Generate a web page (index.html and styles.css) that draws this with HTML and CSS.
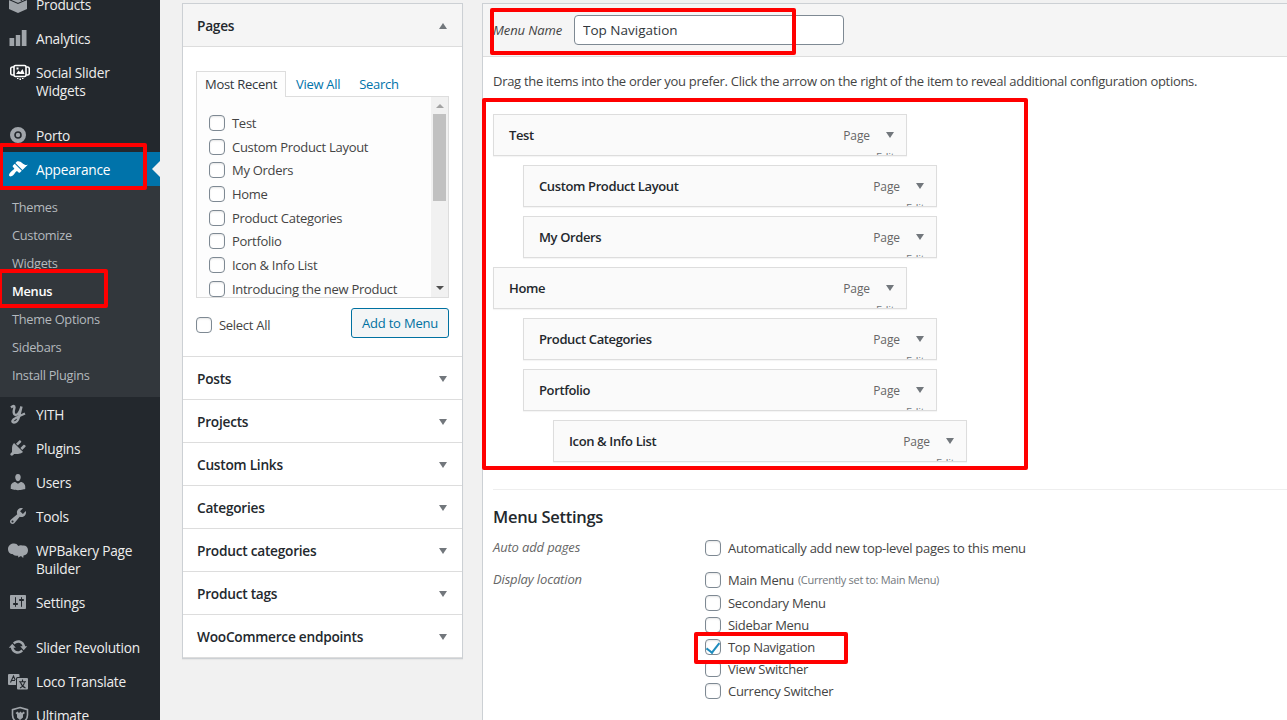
FILE: index.html
```html
<!DOCTYPE html>
<html lang="en">
<head>
  <meta charset="UTF-8">
  <meta name="viewport" content="width=device-width, initial-scale=1.0">
  <title>Menus</title>
  <link rel="stylesheet" href="styles.css">
</head>
<body>
  <div class="wrap">
    <ul class="sidebar">
      <li class="item">
        <svg class="icon" viewBox="0 0 20 20"><path d="M1 4l9-4 9 4v11l-9 4-9-4z"/><path class="cut" d="M1 5.500l9 4 9-4M6 2l8 4.500"/></svg>
        <span>Products</span>
      </li>
      <li class="item">
        <svg class="icon" viewBox="0 0 20 20"><path d="M18.500 18V2h-5v16h5zm-6 0V7h-5v11h5zm-6 0v-8h-5v8h5z"/><path class="cut" d="M7 2v16M13 2v16"/></svg>
        <span>Analytics</span>
      </li>
      <li class="item">
        <svg class="icon social" viewBox="0 0 20 20"><path class="line" d="M5.500 3.500h9a1.500 1.500 0 0 1 1.500 1.500v8a1.500 1.500 0 0 1-1.500 1.500h-9a1.500 1.500 0 0 1-1.500-1.500v-8a1.500 1.500 0 0 1 1.500-1.500zM4 5H2.300Q.7 5 .7 7v4q0 2 1.600 2H4M16 5h1.700q1.600 0 1.600 2v4q0 2-1.600 2H16"/><path d="M6 12l2.500-3.500 1.700 1.800L12.500 7l2 5zM6.500 5.500h2v2h-2zM7 16h1.500v1H7zM9.500 16.500H11v1.500H9.500zM12 16h1.500v1H12z"/></svg>
        <span>Social Slider Widgets</span>
      </li>
      <li class="item gap">
        <svg class="icon" viewBox="0 0 20 20"><circle class="ring" cx="10" cy="10" r="5.900"/><circle cx="10" cy="10" r="2.200"/></svg>
        <span>Porto</span>
      </li>
      <li class="item current">
        <svg class="icon" viewBox="0 0 20 20"><path d="M14.480 11.060L7.410 3.990l1.500-1.500c.5-.56 2.300-.47 3.510.32 1.210.8 1.430 1.280 2.910 2.100 1.180.64 2.450 1.260 4.450.85zm-.71.71L6.700 4.700 4.930 6.470c-.39.39-.39 1.020 0 1.410l1.060 1.060c.39.39.39 1.030 0 1.420-.6.6-1.430 1.110-2.210 1.690-.35.26-.7.53-1.010.84C1.430 14.230.4 16.080 1.400 17.070c.99 1 2.840-.03 4.180-1.360.31-.31.58-.66.85-1.020.57-.78 1.080-1.610 1.690-2.210.39-.39 1.020-.39 1.410 0l1.060 1.060c.39.39 1.020.39 1.410 0z"/></svg>
        <span>Appearance</span>
      </li>
      <li>
        <ul class="submenu">
          <li>Themes</li>
          <li>Customize</li>
          <li>Widgets</li>
          <li class="active">Menus</li>
          <li>Theme Options</li>
          <li>Sidebars</li>
          <li>Install Plugins</li>
        </ul>
      </li>
      <li class="item">
        <svg class="icon" viewBox="0 0 20 20"><path class="line yith" d="M3 3.500Q6.500.5 6.500 3.500 4.500 10.500 7.500 11 11 11 13.500 2.500L11 13Q9.500 18.500 6 18.500 3 18 5.500 15.500 8 13.500 17 9.500"/></svg>
        <span>YITH</span>
      </li>
      <li class="item">
        <svg class="icon" viewBox="0 0 20 20"><path d="M13.110 4.360L9.870 7.600 8 5.730l3.240-3.240c.35-.34 1.050-.2 1.560.32.52.51.66 1.210.31 1.550zm-8 1.770l.91-1.120 9.010 9.010-1.190.84c-.71.71-2.630 1.160-3.820 1.160H6.140L4.900 17.260c-.59.59-1.540.59-2.120 0-.59-.58-.59-1.530 0-2.120l1.240-1.240v-3.880c0-1.130.4-3.190 1.090-3.890zm7.260 3.970l3.240-3.240c.34-.35 1.040-.21 1.550.31.52.51.66 1.210.31 1.550l-3.240 3.250z"/></svg>
        <span>Plugins</span>
      </li>
      <li class="item">
        <svg class="icon" viewBox="0 0 20 20"><path d="M10 9.250c-2.270 0-2.730-3.440-2.730-3.440C7 4.020 7.820 2 9.970 2c2.160 0 2.980 2.020 2.710 3.810 0 0-.41 3.440-2.680 3.440zm0 2.570L12.720 10c2.390 0 4.520 2.330 4.520 4.530v2.490s-3.650 1.130-7.240 1.130c-3.650 0-7.240-1.130-7.240-1.130v-2.490c0-2.250 1.940-4.480 4.470-4.480z"/></svg>
        <span>Users</span>
      </li>
      <li class="item">
        <svg class="icon" viewBox="0 0 20 20"><path d="M16.680 9.770c-1.340 1.340-3.300 1.670-4.950.99l-5.410 6.520c-.99.99-2.590.99-3.580 0s-.99-2.590 0-3.570l6.520-5.420c-.68-1.650-.35-3.610.99-4.950 1.280-1.280 3.120-1.620 4.720-1.060l-2.890 2.890 2.820 2.820 2.860-2.870c.53 1.580.18 3.390-1.080 4.650zM3.810 16.210c.4.39 1.040.39 1.430 0 .4-.4.4-1.040 0-1.430-.39-.4-1.030-.4-1.430 0-.39.39-.39 1.030 0 1.430z"/></svg>
        <span>Tools</span>
      </li>
      <li class="item">
        <svg class="icon" viewBox="0 0 20 20"><path d="M6 3.500c2 0 3.300.8 4.300 2.500 1.200-.7 2.500-.8 3.700-.4C17.500 4.800 20 7 20 10c0 3.500-2 5-4.500 5.500l-.3 2.500-2.200-2-3 1.500.3-1.700C7.500 15.800 5.500 15.300 4.500 14 2 14 0 12 0 9c0-3.500 3-5.500 6-5.500z"/></svg>
        <span>WPBakery Page Builder</span>
      </li>
      <li class="item">
        <svg class="icon" viewBox="0 0 20 20"><path d="M18 16V4c0-.55-.45-1-1-1H3c-.55 0-1 .45-1 1v12c0 .55.45 1 1 1h14c.55 0 1-.45 1-1zM8 11h1c.55 0 1 .45 1 1s-.45 1-1 1H8v1.500c0 .28-.22.5-.5.5s-.5-.22-.5-.5V13H6c-.55 0-1-.45-1-1s.45-1 1-1h1V5.500c0-.28.22-.5.5-.5s.5.22.5.5V11zm5-2h-1c-.55 0-1-.45-1-1s.45-1 1-1h1V5.500c0-.28.22-.5.5-.5s.5.22.5.5V7h1c.55 0 1 .45 1 1s-.45 1-1 1h-1v5.500c0 .28-.22.5-.5.5s-.5-.22-.5-.5V9z"/></svg>
        <span>Settings</span>
      </li>
      <li class="item gap">
        <svg class="icon" viewBox="0 0 20 20"><path d="M10.200 3.280c3.530 0 6.430 2.610 6.920 6h2.080l-3.500 4-3.500-4h2.320c-.45-1.970-2.210-3.450-4.320-3.450-1.450 0-2.730.71-3.540 1.780L4.950 5.660C6.230 4.200 8.110 3.280 10.200 3.280zm-.4 13.440c-3.520 0-6.430-2.610-6.920-6H.8l3.500-4c1.170 1.330 2.330 2.670 3.500 4H5.480c.45 1.970 2.210 3.450 4.320 3.450 1.450 0 2.730-.71 3.540-1.780l1.710 1.950c-1.280 1.460-3.150 2.380-5.250 2.380z"/></svg>
        <span>Slider Revolution</span>
      </li>
      <li class="item">
        <svg class="icon" viewBox="0 0 20 20"><path d="M1 3h9.500q1 0 1 1v2H9.500Q8 6 8 7.500V14H1q-1 0-1-1V4q0-1 1-1zM10 7h9q1 0 1 1v9.500q0 1-1 1h-9q-1 0-1-1V8q0-1 1-1z"/><path class="cut" d="M2.500 11.500L5.500 5l1.700 4M3.500 9.500H7M14.500 8.500v2M11 10.800h7M12 17q4-2 4.500-6M17.500 17q-4-2-5-6"/></svg>
        <span>Loco Translate</span>
      </li>
      <li class="item">
        <svg class="icon shield" viewBox="0 0 20 20"><path class="line" d="M10 2.500l7.500 2.200V10q0 5.500-7.500 9-7.500-3.500-7.500-9V4.700z"/><path d="M5.500 8l2-1.500L9 8l1.500-1.500L12 8l1.500-1.500L15 8l-2 1.500v3L10 15l-3-2.500v-3z"/></svg>
        <span>Ultimate</span>
      </li>
    </ul>

    <div class="main">
      <div class="accordion">
        <div class="acc-title open">Pages</div>
        <div class="acc-body">
          <div class="tabs">
            <span class="tab on">Most Recent</span>
            <span class="tab">View All</span>
            <span class="tab">Search</span>
          </div>
          <div class="tab-panel">
            <div class="pages">
              <label><input type="checkbox"><span>Test</span></label>
              <label><input type="checkbox"><span>Custom Product Layout</span></label>
              <label><input type="checkbox"><span>My Orders</span></label>
              <label><input type="checkbox"><span>Home</span></label>
              <label><input type="checkbox"><span>Product Categories</span></label>
              <label><input type="checkbox"><span>Portfolio</span></label>
              <label><input type="checkbox"><span>Icon &amp; Info List</span></label>
              <label><input type="checkbox"><span>Introducing the new Product</span></label>
            </div>
            <div class="scroll">
              <i class="up"></i>
              <div class="thumb"></div>
              <i class="down"></i>
            </div>
          </div>
          <div class="actions">
            <label><input type="checkbox"><span>Select All</span></label>
            <button class="add">Add to Menu</button>
          </div>
        </div>
        <div class="acc-title">Posts</div>
        <div class="acc-title">Projects</div>
        <div class="acc-title">Custom Links</div>
        <div class="acc-title">Categories</div>
        <div class="acc-title">Product categories</div>
        <div class="acc-title">Product tags</div>
        <div class="acc-title">WooCommerce endpoints</div>
      </div>

      <div class="edit">
        <div class="edit-head">
          <label class="name-label" for="name">Menu Name</label>
          <input class="name-input" id="name" type="text" value="Top Navigation">
        </div>
        <div class="edit-body">
          <p class="drag">Drag the items into the order you prefer. Click the arrow on the right of the item to reveal additional configuration options.</p>
          <ul class="menu">
            <li><b>Test</b><span class="type">Page</span><span class="arrow"><em>Edit</em></span></li>
            <li class="depth1"><b>Custom Product Layout</b><span class="type">Page</span><span class="arrow"><em>Edit</em></span></li>
            <li class="depth1"><b>My Orders</b><span class="type">Page</span><span class="arrow"><em>Edit</em></span></li>
            <li><b>Home</b><span class="type">Page</span><span class="arrow"><em>Edit</em></span></li>
            <li class="depth1"><b>Product Categories</b><span class="type">Page</span><span class="arrow"><em>Edit</em></span></li>
            <li class="depth1"><b>Portfolio</b><span class="type">Page</span><span class="arrow"><em>Edit</em></span></li>
            <li class="depth2"><b>Icon &amp; Info List</b><span class="type">Page</span><span class="arrow"><em>Edit</em></span></li>
          </ul>
          <div class="settings">
            <h3>Menu Settings</h3>
            <div class="group">
              <div class="legend">Auto add pages</div>
              <div class="options">
                <label><input type="checkbox"><span>Automatically add new top-level pages to this menu</span></label>
              </div>
            </div>
            <div class="group">
              <div class="legend">Display location</div>
              <div class="options">
                <label><input type="checkbox"><span>Main Menu</span> <small>(Currently set to: Main Menu)</small></label>
                <label><input type="checkbox"><span>Secondary Menu</span></label>
                <label><input type="checkbox"><span>Sidebar Menu</span></label>
                <label><input type="checkbox" checked><span>Top Navigation</span></label>
                <label><input type="checkbox"><span>View Switcher</span></label>
                <label><input type="checkbox"><span>Currency Switcher</span></label>
              </div>
            </div>
          </div>
        </div>
      </div>
    </div>

    <!-- highlights -->
    <div class="mark mark-appearance"></div>
    <div class="mark mark-menus"></div>
    <div class="mark mark-name"></div>
    <div class="mark mark-items"></div>
    <div class="mark mark-location"></div>
  </div>
</body>
</html>
```

FILE: styles.css
```css
*{
  margin: 0;
  padding: 0;
  box-sizing: border-box;
}
body{
  background: #f1f1f1;
  color: #444;
  font: 13px/18px "Open Sans", "Noto Sans", sans-serif;
  letter-spacing: -.29px;
  overflow: hidden;
}
ul{
  list-style: none;
}
.wrap{
  position: relative;
  display: flex;
  height: 720px;
  overflow: hidden;
}

/* sidebar */
.sidebar{
  width: 160px;
  height: 745px;
  margin-top: -13px;
  flex-shrink: 0;
  background: #23282d;
  color: #eee;
}
.item{
  display: flex;
  padding: 8px 10px 8px 8px;
  font-size: 13.7px;
  letter-spacing: -.22px;
}
.item span{
  margin-bottom: -1px;
  padding: 1px 0 0 8px;
}
.gap{
  margin-top: 11px;
}
.icon{
  width: 20px;
  height: 20px;
  margin: -1px 0;
  flex-shrink: 0;
  fill: #a0a5aa;
}
.icon .ring{
  fill: none;
  stroke: #a0a5aa;
  stroke-width: 4.2;
}
.icon .line{
  fill: none;
  stroke: #a0a5aa;
  stroke-width: 1.6;
}
.icon .cut{
  fill: none;
  stroke: #23282d;
  stroke-width: 1.1;
}
.icon .yith{
  stroke-width: 2.4;
}
.social{
  margin: -1px -2px 0 2px;
  fill: #fff;
}
.social .line{
  stroke: #fff;
}
.shield{
  margin: -1px -2px 0 2px;
}
.current{
  position: relative;
  background: #0073aa;
  color: #fff;
}
.current .icon{
  fill: #fff;
}
.current::after{
  content: "";
  position: absolute;
  right: 0;
  top: 9px;
  border: 8px solid transparent;
  border-left: 0;
  border-right-color: #f1f1f1;
}
.submenu{
  padding: 7px 12px 8px;
  background: #32373c;
  color: #b4b9be;
}
.submenu li{
  line-height: 28px;
  font-size: 12.8px;
}
.submenu .active{
  color: #fff;
  font-weight: 600;
}

/* content */
.main{
  display: flex;
  flex: 1;
  gap: 19px;
  padding: 3px 0 0 22px;
}
.accordion{
  width: 281px;
  align-self: flex-start;
  flex-shrink: 0;
  background: #fff;
  border: 1px solid #ccd0d4;
  box-shadow: 0 1px 1px rgba(0, 0, 0, .04);
}
.acc-title{
  display: flex;
  justify-content: space-between;
  align-items: center;
  height: 43px;
  padding: 1px 15px 0 14px;
  border-bottom: 1px solid #ddd;
  color: #23282d;
  font-size: 13.7px;
  font-weight: 600;
  letter-spacing: -.25px;
}
.acc-title::after{
  content: "";
  border: 4px solid transparent;
  border-top: 6px solid #72777c;
  border-bottom: 0;
}
.acc-title.open{
  background: #f5f5f5;
}
.acc-title.open::after{
  border-top: 0;
  border-bottom: 6px solid #72777c;
}
.acc-body{
  height: 310px;
  padding: 24px 13px 0;
  border-bottom: 1px solid #ddd;
}
.tabs{
  display: flex;
  color: #0073aa;
}
.tab{
  height: 25px;
  padding: 4px 9px 0 10px;
  line-height: 18px;
}
.tab.on{
  width: 90px;
  height: 26px;
  margin-bottom: -1px;
  padding: 3px 0 0 8px;
  background: #fdfdfd;
  border: 1px solid #ddd;
  border-bottom: 0;
  color: #32373c;
  z-index: 1;
}
.tab-panel{
  display: flex;
  height: 202px;
  background: #fdfdfd;
  border: 1px solid #ddd;
  overflow: hidden;
}
.pages{
  flex: 1;
  padding: 14px 0 0 12px;
}
label{
  display: flex;
  align-items: center;
}
.pages label{
  height: 23.7px;
  white-space: nowrap;
}
input[type=checkbox]{
  appearance: none;
  width: 16px;
  height: 16px;
  margin-right: 7px;
  flex-shrink: 0;
  background: #fff;
  border: 1px solid #7e8993;
  border-radius: 4px;
  box-shadow: inset 0 1px 2px rgba(0, 0, 0, .1);
}
input[type=checkbox]:checked{
  display: flex;
  justify-content: center;
}
input[type=checkbox]:checked::before{
  content: "";
  width: 6px;
  height: 11px;
  border: solid #1e8cbe;
  border-width: 0 2.5px 2.5px 0;
  transform: rotate(38deg);
}
.scroll{
  display: flex;
  flex-direction: column;
  align-items: center;
  width: 17px;
  background: #f1f1f1;
}
.scroll i{
  border: 4px solid transparent;
}
.scroll .up{
  margin: 7px 0 6px;
  border-top: 0;
  border-bottom-color: #a3a3a3;
}
.scroll .thumb{
  width: 13px;
  height: 87px;
  background: #c1c1c1;
}
.scroll .down{
  margin: auto 0 7px;
  border-bottom: 0;
  border-top-color: #505050;
}
.actions{
  display: flex;
  justify-content: space-between;
  padding-top: 10px;
}
.actions label{
  height: 34px;
}
.add{
  width: 98px;
  height: 30px;
  background: #f3f5f6;
  border: 1px solid #0071a1;
  border-radius: 3px;
  color: #0071a1;
  font: inherit;
  letter-spacing: -.2px;
}

/* menu editor */
.edit{
  flex: 1;
  height: 740px;
  background: #fff;
  border: 1px solid #ccd0d4;
  border-right: 0;
}
.edit-head{
  display: flex;
  align-items: center;
  height: 53px;
  padding-left: 10px;
  background: #f5f5f5;
  border-bottom: 1px solid #ddd;
}
.name-label{
  width: 81px;
  font-style: italic;
  letter-spacing: -.1px;
}
.name-input{
  width: 270px;
  height: 30px;
  padding: 0 8px;
  background: #fff;
  border: 1px solid #7e8993;
  border-radius: 4px;
  color: #32373c;
  font: 13.5px "Open Sans", sans-serif;
}
.edit-body{
  padding: 15px 0 0 10px;
}
.drag{
  white-space: nowrap;
}
.menu{
  display: flex;
  flex-direction: column;
  gap: 9px;
  margin: 24px 0 27px;
}
.menu li{
  display: flex;
  width: 414px;
  height: 42px;
  padding: 0 10px 0 15px;
  background: #fafafa;
  border: 1px solid #ddd;
  box-shadow: 0 1px 1px rgba(0, 0, 0, .04);
  line-height: 41px;
  overflow: hidden;
}
.menu .depth1{
  margin-left: 30px;
}
.menu .depth2{
  margin-left: 60px;
}
.menu b{
  flex: 1;
  color: #23282d;
  font-weight: 600;
  letter-spacing: -.38px;
}
.menu .type{
  color: #666;
  font-size: 12px;
  letter-spacing: -.1px;
}
.menu .arrow{
  width: 20px;
  margin-left: 6px;
}
.menu .arrow::before{
  content: "";
  display: block;
  margin: 17px 0 0 9.5px;
  width: 0;
  border: 4.5px solid transparent;
  border-top: 6px solid #72777c;
  border-bottom: 0;
}
.menu em{
  display: block;
  margin-top: 10px;
  color: #72777c;
  font: 11px/18px "Open Sans", sans-serif;
}
.settings{
  border-top: 1px solid #eee;
  padding-top: 16px;
}
.settings h3{
  color: #23282d;
  font-size: 16.5px;
  font-weight: 600;
  line-height: 22px;
}
.group{
  display: flex;
  padding-top: 9px;
}
.legend{
  width: 212px;
  padding-top: 1px;
  color: #666;
  font-style: italic;
  letter-spacing: -.15px;
}
.options label{
  height: 22px;
}
.options label:first-child{
  height: 21px;
  margin-bottom: 2px;
}
.options small{
  margin-left: 4px;
  color: #72777c;
  font-size: 11px;
}

/* highlights */
.mark{
  position: absolute;
  border: 4px solid #f00;
  border-radius: 2px;
}
.mark-appearance{
  left: -1px;
  top: 143px;
  width: 148px;
  height: 47px;
}
.mark-menus{
  left: -2px;
  top: 269px;
  width: 110px;
  height: 39px;
}
.mark-name{
  left: 490px;
  top: 8px;
  width: 306px;
  height: 47px;
}
.mark-items{
  left: 482px;
  top: 98px;
  width: 546px;
  height: 372px;
}
.mark-location{
  left: 694px;
  top: 632px;
  width: 154px;
  height: 32px;
}
```
